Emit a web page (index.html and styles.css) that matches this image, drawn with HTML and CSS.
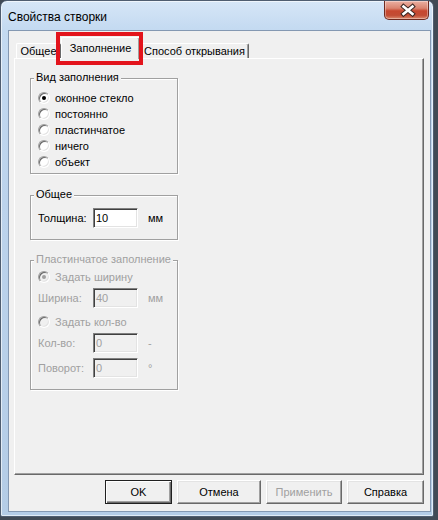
FILE: index.html
```html
<!DOCTYPE html>
<html lang="ru">
<head>
<meta charset="utf-8">
<title>Свойства створки</title>
<link rel="stylesheet" href="styles.css">
</head>
<body>
<div class="window">
  <div class="titlebar">
    <span class="title">Свойства створки</span>
    <div class="close">
      <svg width="43" height="18" viewBox="0 0 43 18">
        <path d="M18.5 5.5 L27.5 13 M27.5 5.5 L18.5 13" stroke="#3a2622" stroke-width="4.6" stroke-linecap="square" fill="none"/>
        <path d="M18.5 5.5 L27.5 13 M27.5 5.5 L18.5 13" stroke="#ffffff" stroke-width="2.6" stroke-linecap="square" fill="none"/>
      </svg>
    </div>
  </div>
  <div class="client">
    <div class="tabs">
      <div class="tab tab-general">Общее</div>
      <div class="tab tab-fill">Заполнение<span class="highlight"></span></div>
      <div class="tab tab-open">Способ открывания</div>
    </div>
    <div class="panel">
      <div class="group group-kind">
        <span class="legend">Вид заполнения</span>
        <div class="radio-row"><span class="radio checked"></span><span>оконное стекло</span></div>
        <div class="radio-row"><span class="radio"></span><span>постоянно</span></div>
        <div class="radio-row"><span class="radio"></span><span>пластинчатое</span></div>
        <div class="radio-row"><span class="radio"></span><span>ничего</span></div>
        <div class="radio-row"><span class="radio"></span><span>объект</span></div>
      </div>
      <div class="group group-common">
        <span class="legend">Общее</span>
        <div class="field-row">
          <span class="field-label">Толщина:</span>
          <span class="input">10</span>
          <span class="unit">мм</span>
        </div>
      </div>
      <div class="group group-plate disabled">
        <span class="legend">Пластинчатое заполнение</span>
        <div class="radio-row"><span class="radio checked"></span><span>Задать ширину</span></div>
        <div class="field-row row-gap-s">
          <span class="field-label">Ширина:</span>
          <span class="input">40</span>
          <span class="unit">мм</span>
        </div>
        <div class="radio-row row-gap-m"><span class="radio"></span><span>Задать кол-во</span></div>
        <div class="field-row row-gap-s">
          <span class="field-label">Кол-во:</span>
          <span class="input">0</span>
          <span class="unit">-</span>
        </div>
        <div class="field-row row-gap-l">
          <span class="field-label">Поворот:</span>
          <span class="input">0</span>
          <span class="unit">°</span>
        </div>
      </div>
    </div>
    <div class="buttons">
      <div class="btn btn-default btn-ok">OK</div>
      <div class="btn btn-cancel">Отмена</div>
      <div class="btn btn-apply is-disabled">Применить</div>
      <div class="btn btn-help">Справка</div>
    </div>
  </div>
</div>
</body>
</html>
```
FILE: styles.css
```css
* { box-sizing: border-box; }
html, body { margin: 0; padding: 0; }
body {
  width: 438px;
  height: 520px;
  overflow: hidden;
  background: #414a55;
  font-family: "Liberation Sans", Arial, sans-serif;
  font-size: 11px;
  color: #000;
}
.window {
  width: 434px;
  height: 517px;
  border: 1px solid #4f5d70;
  border-radius: 7px 7px 2px 2px;
  background: linear-gradient(180deg, #d6e6f7 0px, #c4daf1 28px, #bcd3ec 200px, #b4cce6 100%);
  box-shadow: inset 0 0 0 1px rgba(255,255,255,0.6);
  display: flex;
  flex-direction: column;
}
.titlebar {
  height: 29px;
  display: flex;
  align-items: flex-start;
  padding-left: 7px;
}
.title {
  font-size: 12px;
  line-height: 29px;
  padding-top: 2px;
  color: #000;
}
.close {
  margin-left: auto;
  margin-right: 4px;
  width: 45px;
  height: 19px;
  border: 1px solid #6e2a20;
  border-top: none;
  border-radius: 0 0 5px 5px;
  background: linear-gradient(180deg, #ebb0a2 0%, #da8470 40%, #c7472f 55%, #c24d35 80%, #dc8a6e 100%);
  box-shadow: inset 0 0 0 1px rgba(255,255,255,0.35);
}
.close svg { display: block; }
.client {
  margin-left: 7px;
  width: 423px;
  height: 482px;
  border: 1px solid #8498b2;
  background: #f0f0f0;
  display: flex;
  flex-direction: column;
  padding-left: 5px;
}
.tabs {
  height: 27px;
  display: flex;
  align-items: flex-end;
  padding-left: 2px;
  position: relative;
  z-index: 1;
}
.tab {
  height: 15px;
  line-height: 14px;
  text-align: center;
  white-space: nowrap;
  background: #f0f0f0;
  border-top: 1px solid #fff;
  border-left: 1px solid #fff;
  border-right: 1px solid #696969;
  box-shadow: inset -1px 0 0 #a0a0a0;
  border-radius: 2px 2px 0 0;
}
.tab-general { width: 45px; }
.tab-fill {
  width: 79px;
  height: 22px;
  margin-bottom: -1px;
  padding-top: 3px;
  position: relative;
}
.tab-open { width: 109px; }
.highlight {
  position: absolute;
  left: -6px;
  top: -6px;
  width: 87px;
  height: 33px;
  border: 4px solid #e3141c;
}
.panel {
  width: 410px;
  height: 417px;
  border: 1px solid;
  border-color: #fff #696969 #696969 #fff;
  box-shadow: inset -1px -1px 0 #a0a0a0;
  padding: 19px 0 0 15px;
}
.group {
  position: relative;
  width: 148px;
  border: 1px solid #a0a0a0;
  box-shadow: inset 1px 1px 0 #fff, 1px 1px 0 #fff;
}
.legend {
  position: absolute;
  top: -8px;
  left: 3px;
  padding: 0 2px;
  line-height: 13px;
  background: #f0f0f0;
  white-space: nowrap;
}
.group-kind { padding: 11px 0 3px 7px; }
.group-common { margin-top: 21px; padding: 12px 0 11px 7px; }
.group-plate { margin-top: 20px; padding: 8px 0 11px 7px; }
.radio-row {
  display: flex;
  align-items: center;
  height: 16px;
  white-space: nowrap;
}
.radio {
  flex: none;
  width: 12px;
  height: 12px;
  margin-right: 5px;
  border-radius: 50%;
  background: #fff;
  border: 1px solid;
  border-color: #a0a0a0 #fff #fff #a0a0a0;
  box-shadow: inset 1px 1px 0 #696969, inset -1px -1px 0 #e3e3e3;
  display: flex;
  align-items: center;
  justify-content: center;
}
.radio.checked::after {
  content: "";
  width: 4px;
  height: 4px;
  border-radius: 50%;
  background: #000;
}
.field-row {
  display: flex;
  align-items: center;
  height: 20px;
  white-space: nowrap;
}
.field-label { width: 55px; }
.input {
  width: 45px;
  height: 20px;
  border: 1px solid;
  border-color: #808080 #fff #fff #808080;
  box-shadow: inset 1px 1px 0 #404040, inset -1px -1px 0 #e3e3e3;
  background: #fff;
  padding-left: 2px;
  line-height: 18px;
  color: #000;
}
.unit { margin-left: 10px; }
.row-gap-s { margin-top: 3px; }
.row-gap-m { margin-top: 6px; }
.row-gap-l { margin-top: 5px; }
.disabled { color: #a0a0a0; }
.disabled .radio { background: #f0f0f0; }
.disabled .radio.checked::after { background: #a0a0a0; }
.disabled .input { background: #f0f0f0; color: #a0a0a0; }
.buttons {
  width: 410px;
  display: flex;
  justify-content: flex-end;
  gap: 5px;
  margin-top: 5px;
}
.btn {
  height: 24px;
  display: flex;
  align-items: center;
  justify-content: center;
  background: #f0f0f0;
  border: 1px solid;
  border-color: #fff #696969 #696969 #fff;
  box-shadow: inset -1px -1px 0 #a0a0a0, inset 1px 1px 0 #e3e3e3;
  white-space: nowrap;
}
.btn-default {
  border-color: #202020;
  box-shadow: inset 1px 1px 0 #fff, inset -1px -1px 0 #696969, inset -2px -2px 0 #a0a0a0;
}
.btn-ok { width: 67px; }
.btn-cancel { width: 84px; }
.btn-apply { width: 76px; }
.btn-help { width: 77px; }
.is-disabled { color: #a0a0a0; }
```
